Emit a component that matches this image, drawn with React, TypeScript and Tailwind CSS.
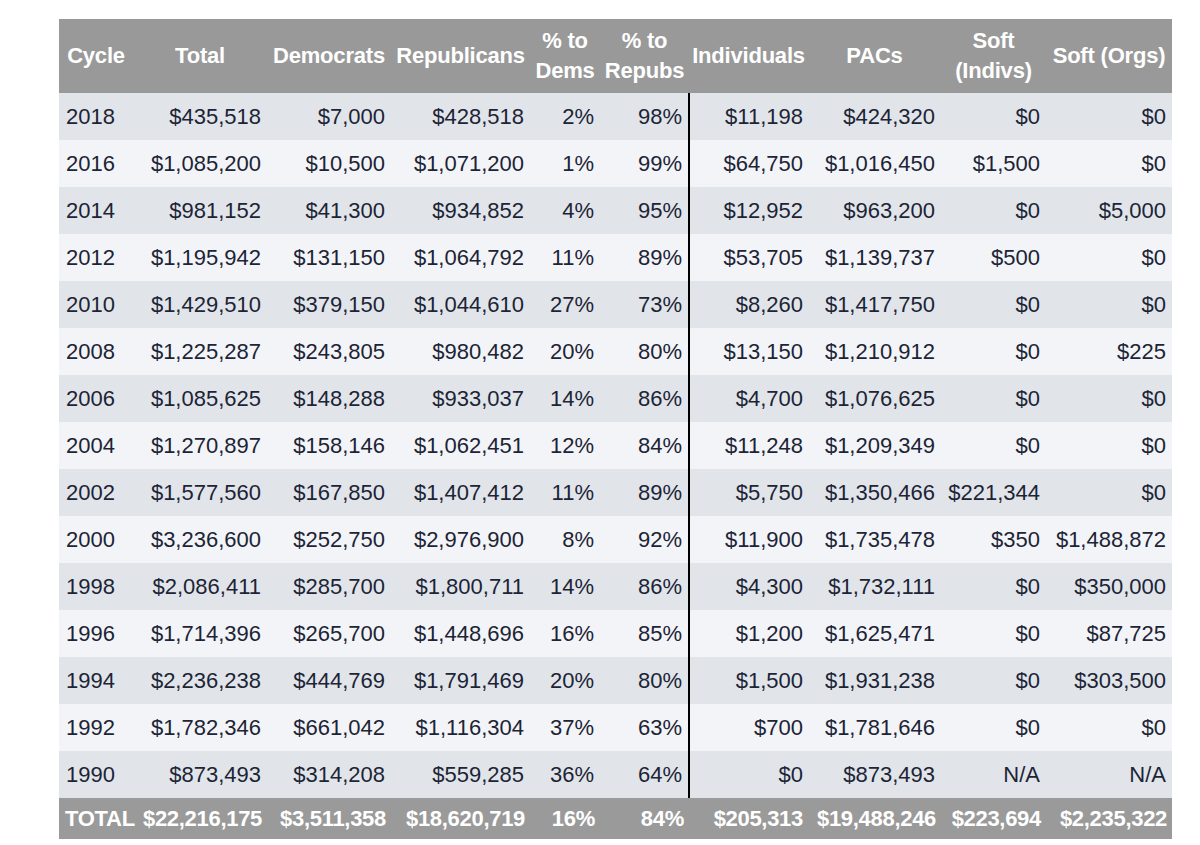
import React from 'react';

type Row = [string, string, string, string, string, string, string, string, string, string];

const ROWS: Row[] = [
  ['2018', '$435,518', '$7,000', '$428,518', '2%', '98%', '$11,198', '$424,320', '$0', '$0'],
  ['2016', '$1,085,200', '$10,500', '$1,071,200', '1%', '99%', '$64,750', '$1,016,450', '$1,500', '$0'],
  ['2014', '$981,152', '$41,300', '$934,852', '4%', '95%', '$12,952', '$963,200', '$0', '$5,000'],
  ['2012', '$1,195,942', '$131,150', '$1,064,792', '11%', '89%', '$53,705', '$1,139,737', '$500', '$0'],
  ['2010', '$1,429,510', '$379,150', '$1,044,610', '27%', '73%', '$8,260', '$1,417,750', '$0', '$0'],
  ['2008', '$1,225,287', '$243,805', '$980,482', '20%', '80%', '$13,150', '$1,210,912', '$0', '$225'],
  ['2006', '$1,085,625', '$148,288', '$933,037', '14%', '86%', '$4,700', '$1,076,625', '$0', '$0'],
  ['2004', '$1,270,897', '$158,146', '$1,062,451', '12%', '84%', '$11,248', '$1,209,349', '$0', '$0'],
  ['2002', '$1,577,560', '$167,850', '$1,407,412', '11%', '89%', '$5,750', '$1,350,466', '$221,344', '$0'],
  ['2000', '$3,236,600', '$252,750', '$2,976,900', '8%', '92%', '$11,900', '$1,735,478', '$350', '$1,488,872'],
  ['1998', '$2,086,411', '$285,700', '$1,800,711', '14%', '86%', '$4,300', '$1,732,111', '$0', '$350,000'],
  ['1996', '$1,714,396', '$265,700', '$1,448,696', '16%', '85%', '$1,200', '$1,625,471', '$0', '$87,725'],
  ['1994', '$2,236,238', '$444,769', '$1,791,469', '20%', '80%', '$1,500', '$1,931,238', '$0', '$303,500'],
  ['1992', '$1,782,346', '$661,042', '$1,116,304', '37%', '63%', '$700', '$1,781,646', '$0', '$0'],
  ['1990', '$873,493', '$314,208', '$559,285', '36%', '64%', '$0', '$873,493', 'N/A', 'N/A'],
];

const TOTAL: Row = ['TOTAL', '$22,216,175', '$3,511,358', '$18,620,719', '16%', '84%', '$205,313', '$19,488,246', '$223,694', '$2,235,322'];

const HEADERS = [
  ['Cycle'],
  ['Total'],
  ['Democrats'],
  ['Republicans'],
  ['% to', 'Dems'],
  ['% to', 'Repubs'],
  ['Individuals'],
  ['PACs'],
  ['Soft', '(Indivs)'],
  ['Soft (Orgs)'],
];

// column widths, px
const WIDTHS = ['w-[74px]', 'w-[134px]', 'w-[124px]', 'w-[139px]', 'w-[70px]', 'w-[89px]', 'w-[119px]', 'w-[133px]', 'w-[105px]', 'w-[126px]'];

export default function App() {
  return (
    <div className="min-h-[845px] bg-white pl-[59px] pt-[19px] font-['Liberation_Sans',Arial,sans-serif] text-[22px] text-[#1c2436]">
      <table className="w-[1113px] table-fixed border-collapse">
        <colgroup>
          {WIDTHS.map((w, i) => (
            <col key={i} className={w} />
          ))}
        </colgroup>
        <thead>
          <tr className="h-[74px] bg-[#999999] text-white">
            {HEADERS.map((lines, i) => (
              <th key={i} className="whitespace-nowrap px-0 text-center align-middle font-bold leading-[30px] tracking-[-0.2px]">
                {lines.map((l, j) => (
                  <div key={j}>{l}</div>
                ))}
              </th>
            ))}
          </tr>
        </thead>
        <tbody>
          {ROWS.map((row, r) => (
            <tr key={row[0]} className={r % 2 === 0 ? 'h-[47px] bg-[#e1e5ea]' : 'h-[47px] bg-[#f3f4f7]'}>
              {row.map((cell, c) => (
                <td
                  key={c}
                  className={
                    c === 0
                      ? 'whitespace-nowrap pl-[7px] text-left align-middle'
                      : c === 6
                        ? 'whitespace-nowrap border-l-2 border-black pr-[5px] text-right align-middle'
                        : 'whitespace-nowrap pr-[6px] text-right align-middle'
                  }
                >
                  {cell}
                </td>
              ))}
            </tr>
          ))}
          <tr className="h-[41px] bg-[#9a9a9a] font-bold text-white">
            {TOTAL.map((cell, c) => (
              <td
                key={c}
                className={
                  c === 0
                    ? 'whitespace-nowrap pl-[6px] text-left align-middle tracking-[-0.3px]'
                    : 'whitespace-nowrap pr-[5px] text-right align-middle tracking-[-0.3px]'
                }
              >
                {cell}
              </td>
            ))}
          </tr>
        </tbody>
      </table>
    </div>
  );
}
